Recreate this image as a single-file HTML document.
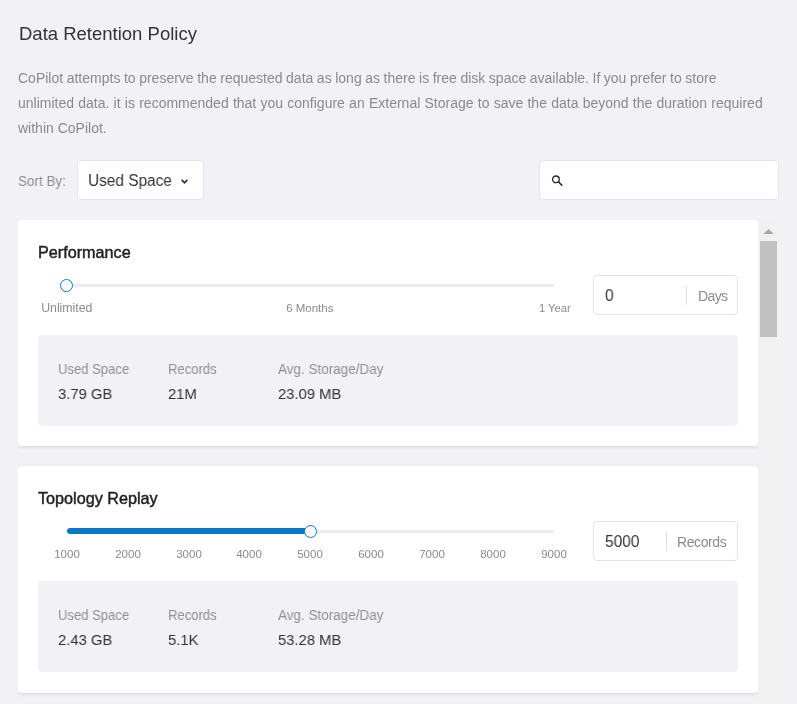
<!DOCTYPE html>
<html><head><meta charset="utf-8">
<style>
*{box-sizing:border-box;margin:0;padding:0}
html,body{width:797px;height:704px;overflow:hidden;background:#f2f2f6;font-family:"Liberation Sans",sans-serif}
.t{position:absolute;white-space:nowrap;line-height:1;will-change:transform}
.box{position:absolute;background:#fff;border:1px solid #e3e3ea;border-radius:4px}
.scroll{position:absolute;left:18px;top:220px;width:740px;height:484px;overflow:hidden}
.card{position:absolute;left:0;width:740px;height:226px;background:#fff;border-radius:4px;box-shadow:0 1px 4px rgba(0,0,0,.12)}
.ct{font-size:16.2px;color:#222;-webkit-text-stroke:0.45px #222}
.track{position:absolute;height:3px;background:#ebebf0;border-radius:2px}
.thumb{position:absolute;width:13px;height:13px;border:1.5px solid #0e78c8;border-radius:50%;background:#fff}
.lbl{font-size:11.5px;color:#8a8a8f}
.inp{position:absolute;left:575px;width:145px;height:40px;border:1px solid #e3e3ea;border-radius:4px;background:#fff}
.sep{position:absolute;width:1px;background:#dedee3}
.stats{position:absolute;left:20px;width:700px;height:90px;background:#f2f2f6;border-radius:4px}
.sl{font-size:13.9px;color:#8f8f94;transform:scaleX(0.94);transform-origin:0 0}
.sv{font-size:15.5px;color:#333;transform:scaleX(0.955);transform-origin:0 0}
</style></head><body>

<div class="t" style="left:19px;top:25.3px;font-size:18.5px;color:#333">Data Retention Policy</div>

<div class="t" style="left:18px;top:70.7px;font-size:14px;color:#89898f;word-spacing:-0.33px">CoPilot attempts to preserve the requested data as long as there is free disk space available. If you prefer to store</div>
<div class="t" style="left:18px;top:95.9px;font-size:14px;color:#89898f;word-spacing:0.34px">unlimited data. it is recommended that you configure an External Storage to save the data beyond the duration required</div>
<div class="t" style="left:18px;top:121px;font-size:14px;color:#89898f">within CoPilot.</div>

<div class="t" style="left:17.8px;top:173.6px;font-size:14.4px;transform:scaleX(0.935);transform-origin:0 0;color:#8c8c92">Sort By:</div>
<div class="box" style="left:77px;top:160px;width:127px;height:40px"></div>
<div class="t" style="left:88.2px;top:172.4px;font-size:17.3px;transform:scaleX(0.89);transform-origin:0 0;color:#333">Used Space</div>
<svg style="position:absolute;left:180px;top:177px" width="10" height="8" viewBox="0 0 10 8"><path d="M1.6 2.8 L4.5 5.8 L7.4 2.8" fill="none" stroke="#24242c" stroke-width="1.6"/></svg>

<div class="box" style="left:539px;top:160px;width:240px;height:40px"></div>
<svg style="position:absolute;left:551px;top:174px" width="13" height="13" viewBox="0 0 13 13"><circle cx="4.9" cy="5.3" r="3.35" fill="none" stroke="#24242c" stroke-width="1.35"/><path d="M7.4 7.8 L11.2 11.6" stroke="#24242c" stroke-width="1.5"/></svg>

<div class="scroll">
  <!-- card 1 -->
  <div class="card" style="top:0">
    <div class="t ct" style="left:20.3px;top:24.3px">Performance</div>
    <div class="track" style="left:48.7px;top:63.7px;width:487.3px"></div>
    <div class="thumb" style="left:42.3px;top:58.6px"></div>
    <div class="t lbl" style="left:0;width:97.6px;text-align:center;top:81.9px;font-size:12.3px">Unlimited</div>
    <div class="t lbl" style="left:242.7px;width:97.6px;text-align:center;top:83.2px">6 Months</div>
    <div class="t lbl" style="left:487.8px;width:97.6px;text-align:center;top:83.2px;font-size:11.2px">1 Year</div>
    <div class="inp" style="top:55px"></div>
    <div class="t" style="left:586.6px;top:66.8px;font-size:16.5px;transform:scaleX(0.94);transform-origin:0 0;color:#333">0</div>
    <div class="sep" style="left:668px;top:65.5px;height:19px"></div>
    <div class="t" style="left:679.5px;top:69.3px;font-size:14px;letter-spacing:-0.6px;color:#8a8a8f">Days</div>
    <div class="stats" style="top:115px;height:90.5px">
      <div class="t sl" style="left:19.8px;top:28.1px">Used Space</div>
      <div class="t sl" style="left:130px;top:28.1px">Records</div>
      <div class="t sl" style="left:240.4px;top:26.9px;font-size:14px;transform:scaleX(0.963)">Avg. Storage/Day</div>
      <div class="t sv" style="left:20px;top:50.6px">3.79 GB</div>
      <div class="t sv" style="left:130px;top:50.6px">21M</div>
      <div class="t sv" style="left:240.4px;top:50.6px">23.09 MB</div>
    </div>
  </div>
  <!-- card 2 -->
  <div class="card" style="top:246px;height:227px">
    <div class="t ct" style="left:19.9px;top:24.2px">Topology Replay</div>
    <div class="track" style="left:48.7px;top:63.5px;width:487.3px"></div>
    <div class="track" style="left:48.7px;top:61.7px;width:245px;height:6px;background:#0778c8;border-radius:3px"></div>
    <div class="thumb" style="left:286px;top:58.6px"></div>
    <div class="t lbl" style="left:18.7px;width:60px;text-align:center;top:82.5px">1000</div>
    <div class="t lbl" style="left:79.6px;width:60px;text-align:center;top:82.5px">2000</div>
    <div class="t lbl" style="left:140.5px;width:60px;text-align:center;top:82.5px">3000</div>
    <div class="t lbl" style="left:201.4px;width:60px;text-align:center;top:82.5px">4000</div>
    <div class="t lbl" style="left:262.3px;width:60px;text-align:center;top:82.5px">5000</div>
    <div class="t lbl" style="left:323.2px;width:60px;text-align:center;top:82.5px">6000</div>
    <div class="t lbl" style="left:384.1px;width:60px;text-align:center;top:82.5px">7000</div>
    <div class="t lbl" style="left:445px;width:60px;text-align:center;top:82.5px">8000</div>
    <div class="t lbl" style="left:505.9px;width:60px;text-align:center;top:82.5px">9000</div>
    <div class="inp" style="top:55px"></div>
    <div class="t" style="left:586.8px;top:66.8px;font-size:16.5px;transform:scaleX(0.94);transform-origin:0 0;color:#333">5000</div>
    <div class="sep" style="left:648px;top:65.5px;height:19px"></div>
    <div class="t" style="left:658.8px;top:69.4px;font-size:14px;letter-spacing:-0.4px;color:#8a8a8f">Records</div>
    <div class="stats" style="top:115px;height:91px">
      <div class="t sl" style="left:19.8px;top:28.1px">Used Space</div>
      <div class="t sl" style="left:130px;top:28.1px">Records</div>
      <div class="t sl" style="left:240.4px;top:26.9px;font-size:14px;transform:scaleX(0.963)">Avg. Storage/Day</div>
      <div class="t sv" style="left:20px;top:50.6px">2.43 GB</div>
      <div class="t sv" style="left:130px;top:50.6px">5.1K</div>
      <div class="t sv" style="left:240.4px;top:50.6px">53.28 MB</div>
    </div>
  </div>
</div>

<!-- scrollbar -->
<div style="position:absolute;left:758px;top:220px;width:21px;height:484px;background:#f1f1f1"></div>
<div style="position:absolute;left:760px;top:241px;width:17px;height:96px;background:#c1c1c1"></div>
<svg style="position:absolute;left:763px;top:228px" width="11" height="7" viewBox="0 0 11 7"><path d="M0.5 6 L5.5 1 L10.5 6 Z" fill="#a3a3a3"/></svg>

</body></html>
